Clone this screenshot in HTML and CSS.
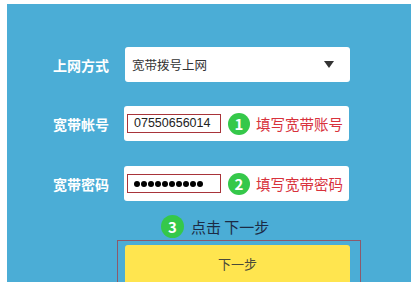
FILE: index.html
```html
<!DOCTYPE html>
<html lang="zh-CN">

<head>
  <meta charset="UTF-8">
  <meta name="viewport" content="width=device-width, initial-scale=1.0">
  <title>上网设置</title>
  <link rel="stylesheet" href="styles.css">
</head>

<body>
  <!-- 上网设置面板 -->
  <div class="panel">
    <div class="row">
      <span class="label">上网方式</span>
      <div class="box select">
        <span class="select-text">宽带拨号上网</span>
        <span class="arrow"></span>
      </div>
    </div>

    <div class="row">
      <span class="label">宽带帐号</span>
      <div class="box">
        <span class="field">07550656014</span>
        <span class="step">1</span>
        <span class="tip">填写宽带账号</span>
      </div>
    </div>

    <div class="row">
      <span class="label">宽带密码</span>
      <div class="box">
        <span class="field dots">
          <i></i><i></i><i></i><i></i><i></i><i></i><i></i><i></i><i></i><i></i>
        </span>
        <span class="step">2</span>
        <span class="tip">填写宽带密码</span>
      </div>
    </div>

    <div class="hint">
      <span class="step">3</span>
      <span class="hint-text">点击 下一步</span>
    </div>

    <div class="next-wrap">
      <button class="next">下一步</button>
    </div>
  </div>
</body>

</html>
```

FILE: styles.css
```css
:root {
  --blue: #4badd6;
  --green: #35c84a;
  --red: #d8323c;
}

* {
  box-sizing: border-box;
  margin: 0;
  padding: 0;
}

body {
  background: #fff;
  padding: 4px 0 0 7px;
  height: 282px;
  overflow: hidden;
  font-family: "Noto Sans CJK SC", "Liberation Sans", sans-serif;
}

/* 蓝色面板 */
.panel {
  background: var(--blue);
  height: 278px;
  padding-top: 43px;
  display: flex;
  flex-direction: column;
}

.row {
  display: flex;
  align-items: center;
  gap: 16px;
  margin-bottom: 24px;
}

.row:nth-child(2) {
  margin-bottom: 25px;
}

.label {
  width: 102px;
  text-align: right;
  color: #fff;
  font-size: 14px;
  font-weight: bold;
}

.box {
  width: 225px;
  height: 35px;
  background: #fff;
  border-radius: 3px;
  display: flex;
  align-items: center;
  padding-left: 3px;
}

.row:nth-child(n+2) .box {
  margin-left: -1px;
}

.select {
  padding: 0 16px 0 7px;
  justify-content: space-between;
}

.select-text {
  font-size: 12.5px;
  color: #333;
}

.arrow {
  width: 0;
  height: 0;
  border-left: 5px solid transparent;
  border-right: 5px solid transparent;
  border-top: 7px solid #333;
}

.field {
  width: 94px;
  height: 19px;
  border: 1px solid #a8343a;
  font-family: "Liberation Sans", sans-serif;
  font-size: 12.5px;
  color: #222;
  line-height: 17px;
  padding-left: 6px;
}

.dots {
  display: flex;
  align-items: center;
  gap: 1px;
}

.dots i {
  width: 6px;
  height: 6px;
  border-radius: 50%;
  background: #000;
}

.step {
  width: 22px;
  height: 22px;
  border-radius: 50%;
  background: var(--green);
  color: #fff;
  font-size: 15px;
  font-weight: bold;
  display: flex;
  align-items: center;
  justify-content: center;
  margin: 0 6px 0 7px;
  flex-shrink: 0;
}

.tip {
  color: var(--red);
  font-size: 14.5px;
  white-space: nowrap;
}

/* 第三步提示 */
.hint {
  display: flex;
  align-items: center;
  margin: -10px 0 0 154px;
  height: 24px;
}

.hint .step {
  width: 23px;
  height: 23px;
  margin: 0 7px 0 0;
}

.hint-text {
  color: #1c2b45;
  font-size: 15px;
}

/* 下一步按钮 */
.next-wrap {
  margin: 2px 0 0 110px;
  width: 244px;
  border: 1px solid #8c5a6c;
  border-bottom: none;
  padding: 4px 10px 0 7px;
  flex: 1;
}

.next {
  width: 225px;
  height: 40px;
  background: #ffe54f;
  border: none;
  border-radius: 3px;
  font-family: "Noto Sans CJK SC", sans-serif;
  font-size: 13px;
  color: #4a4a3a;
  padding-bottom: 4px;
}
```
